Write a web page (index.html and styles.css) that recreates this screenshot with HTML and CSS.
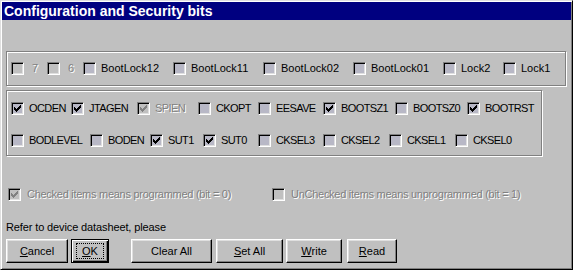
FILE: index.html
```html
<!DOCTYPE html>
<html>
	<head>
		<meta charset="utf-8" />
		<link rel="stylesheet" href="styles.css">
	</head>

	<body>
		<div class="window">
			<div class="titlebar">Configuration and Security bits</div>
			<div class="content">
				<div class="group lockbits">
					<div class="bits row1">
						<label class="bit disabled digit"><span class="box"></span>7</label>
						<label class="bit disabled digit"><span class="box"></span>6</label>
						<label class="bit"><span class="box"></span>BootLock12</label>
						<label class="bit"><span class="box"></span>BootLock11</label>
						<label class="bit"><span class="box"></span>BootLock02</label>
						<label class="bit"><span class="box"></span>BootLock01</label>
						<label class="bit"><span class="box"></span>Lock2</label>
						<label class="bit"><span class="box"></span>Lock1</label>
					</div>
				</div>

				<div class="group fuses">
					<div class="bits row2">
						<label class="bit checked"><span class="box"><svg viewBox="0 0 7 7"><path d="M0 2H1V3H2V4H3V3H4V2H5V1H6V0H7V3H6V4H5V5H4V6H3V7H2V6H1V5H0Z" /></svg></span>OCDEN</label>
						<label class="bit checked"><span class="box"><svg viewBox="0 0 7 7"><path d="M0 2H1V3H2V4H3V3H4V2H5V1H6V0H7V3H6V4H5V5H4V6H3V7H2V6H1V5H0Z" /></svg></span>JTAGEN</label>
						<label class="bit checked disabled"><span class="box"><svg viewBox="0 0 7 7"><path d="M0 2H1V3H2V4H3V3H4V2H5V1H6V0H7V3H6V4H5V5H4V6H3V7H2V6H1V5H0Z" /></svg></span>SPIEN</label>
						<label class="bit"><span class="box"></span>CKOPT</label>
						<label class="bit"><span class="box"></span>EESAVE</label>
						<label class="bit checked"><span class="box"><svg viewBox="0 0 7 7"><path d="M0 2H1V3H2V4H3V3H4V2H5V1H6V0H7V3H6V4H5V5H4V6H3V7H2V6H1V5H0Z" /></svg></span>BOOTSZ1</label>
						<label class="bit"><span class="box"></span>BOOTSZ0</label>
						<label class="bit checked"><span class="box"><svg viewBox="0 0 7 7"><path d="M0 2H1V3H2V4H3V3H4V2H5V1H6V0H7V3H6V4H5V5H4V6H3V7H2V6H1V5H0Z" /></svg></span>BOOTRST</label>
					</div>
					<div class="bits row3">
						<label class="bit"><span class="box"></span>BODLEVEL</label>
						<label class="bit"><span class="box"></span>BODEN</label>
						<label class="bit checked"><span class="box"><svg viewBox="0 0 7 7"><path d="M0 2H1V3H2V4H3V3H4V2H5V1H6V0H7V3H6V4H5V5H4V6H3V7H2V6H1V5H0Z" /></svg></span>SUT1</label>
						<label class="bit checked"><span class="box"><svg viewBox="0 0 7 7"><path d="M0 2H1V3H2V4H3V3H4V2H5V1H6V0H7V3H6V4H5V5H4V6H3V7H2V6H1V5H0Z" /></svg></span>SUT0</label>
						<label class="bit"><span class="box"></span>CKSEL3</label>
						<label class="bit"><span class="box"></span>CKSEL2</label>
						<label class="bit"><span class="box"></span>CKSEL1</label>
						<label class="bit"><span class="box"></span>CKSEL0</label>
					</div>
				</div>

				<div class="legend">
					<label class="bit checked disabled"><span class="box"><svg viewBox="0 0 7 7"><path d="M0 2H1V3H2V4H3V3H4V2H5V1H6V0H7V3H6V4H5V5H4V6H3V7H2V6H1V5H0Z" /></svg></span>Checked items means programmed (bit = 0)</label>
					<label class="bit disabled"><span class="box"></span>UnChecked items means unprogrammed (bit = 1)</label>
				</div>

				<div class="note">Refer to device datasheet, please</div>

				<div class="buttons">
					<button class="btn cancel"><u>C</u>ancel</button>
					<button class="btn ok default"><span class="focus"><u>O</u>K</span></button>
					<button class="btn clear">Clear All</button>
					<button class="btn setall"><u>S</u>et All</button>
					<button class="btn write"><u>W</u>rite</button>
					<button class="btn read"><u>R</u>ead</button>
				</div>
			</div>
		</div>
	</body>
</html>
```

FILE: styles.css
```css
body {
    margin: 0;
    width: 573px;
    height: 270px;
    overflow: hidden;
    font-family: "Liberation Sans", Arial, sans-serif;
    font-size: 11px;
    color: #000;
    background-color: #c0c0c0;
}

.window {
    box-sizing: border-box;
    width: 573px;
    height: 270px;
    padding: 1px;
    background-color: #c0c0c0;
    border: 1px solid;
    border-color: #dfdfdf #000 #000 #dfdfdf;
    box-shadow: inset 1px 1px 0 #fff, inset -1px -1px 0 #808080;
}

.titlebar {
    height: 18px;
    line-height: 18px;
    padding-left: 2px;
    background-color: #000080;
    color: #fff;
    font-weight: bold;
    font-size: 14px;
    white-space: nowrap;
}

.content {
    padding: 0 0 0 4px;
}

/* etched group frames */
.group {
    box-sizing: border-box;
    border: 1px solid #808080;
    box-shadow: 1px 1px 0 #fff, inset 1px 1px 0 #fff;
    padding-left: 4px;
}

.lockbits {
    width: 560px;
    height: 35px;
    margin-top: 31px;
    display: flex;
    align-items: center;
}

.fuses {
    width: 536px;
    height: 66px;
    margin-top: 4px;
    padding-top: 11px;
    display: flex;
    flex-direction: column;
    gap: 19px;
}

.bits {
    display: grid;
}

.row1 { grid-template-columns: 36px 36px 90px 90px 90px 90px 60px auto; }
.row2 { grid-template-columns: 60px 66px 61px 60px 65px 72px 72px auto; }
.row3 { grid-template-columns: 79px 60px 53px 55px 65px 66px 66px auto; }

.row2 .bit, .row3 .bit {
    letter-spacing: -0.6px;
}

.bit {
    display: flex;
    align-items: center;
    gap: 5px;
    height: 13px;
    line-height: 13px;
    white-space: nowrap;
}

.bit.digit {
    gap: 8px;
}

.box {
    box-sizing: border-box;
    flex: none;
    width: 13px;
    height: 13px;
    display: flex;
    align-items: center;
    justify-content: center;
    background-color: #b8b8c6;
    border: 1px solid;
    border-color: #808080 #fff #fff #808080;
    box-shadow: inset 1px 1px 0 #000, inset -1px -1px 0 #dfdfdf;
}

.box svg {
    width: 7px;
    height: 7px;
    fill: #000;
    shape-rendering: crispEdges;
}

.disabled {
    color: #808080;
    text-shadow: 1px 1px 0 #fff;
}

.disabled .box {
    background-color: #c0c0c0;
}

.disabled .box svg {
    fill: #808080;
}

.legend {
    display: grid;
    grid-template-columns: 264px auto;
    margin-top: 32px;
    padding-left: 2px;
    letter-spacing: -0.27px;
}

.legend .bit {
    gap: 6px;
}

.note {
    margin-top: 20px;
    height: 13px;
    line-height: 13px;
    letter-spacing: -0.12px;
}

.buttons {
    display: flex;
    margin-top: 5px;
}

.btn {
    box-sizing: border-box;
    height: 24px;
    padding: 0;
    font-family: inherit;
    font-size: 11px;
    color: #000;
    background-color: #c0c0c0;
    border: 1px solid;
    border-color: #fff #000 #000 #fff;
    box-shadow: inset -1px -1px 0 #808080, inset 1px 1px 0 #dfdfdf;
    display: flex;
    align-items: center;
    justify-content: center;
}

.btn.default {
    border-color: #000;
    box-shadow: inset 1px 1px 0 #fff, inset -1px -1px 0 #000, inset -2px -2px 0 #808080;
}

.focus {
    padding: 1px 5px;
    outline: 1px dotted #000;
}

.cancel { width: 62px; }
.ok { width: 38px; margin-left: 3px; }
.clear { width: 81px; margin-left: 22px; }
.setall { width: 67px; margin-left: 4px; }
.write { width: 56px; margin-left: 3px; }
.read { width: 50px; margin-left: 5px; }
```
